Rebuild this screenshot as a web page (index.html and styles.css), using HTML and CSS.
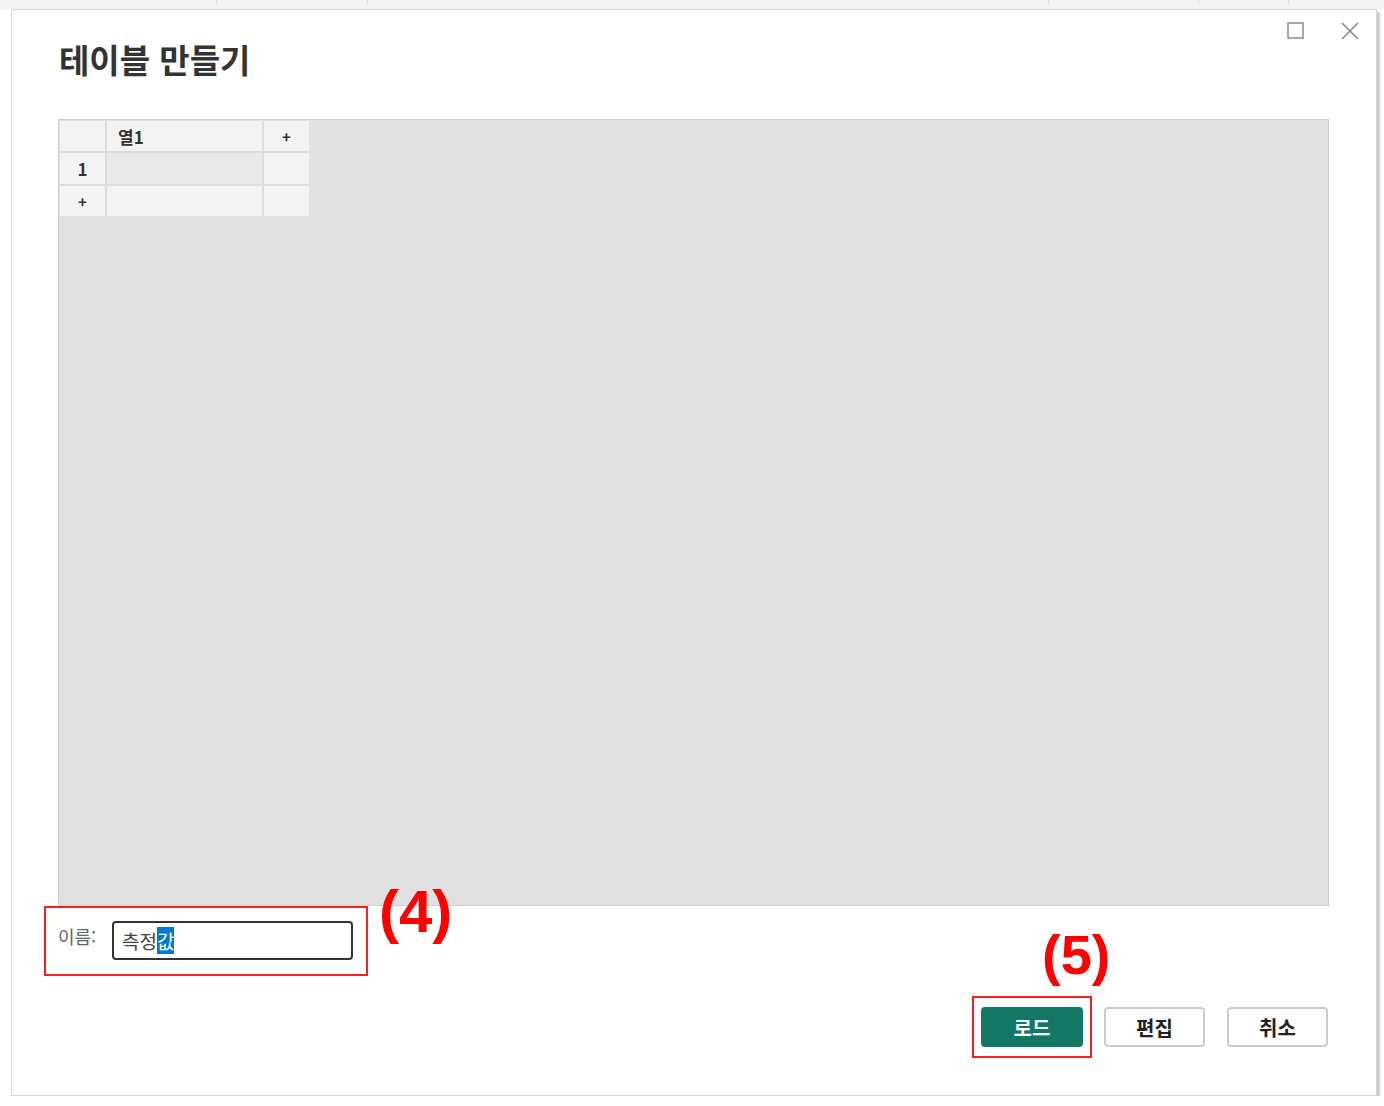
FILE: index.html
```html
<!DOCTYPE html>
<html lang="ko">

<head>
    <meta charset="utf-8" />
    <title>테이블 만들기</title>
    <link rel="stylesheet" href="styles.css">
</head>

<body>
    <div class="backdrop-strip">
        <span class="strip-part strip-a"></span>
        <span class="strip-part strip-b"></span>
        <span class="strip-part strip-c"></span>
        <span class="strip-part strip-d"></span>
        <span class="strip-part strip-e"></span>
    </div>

    <div class="dialog">
        <div class="window-controls">
            <svg class="win-btn" width="17" height="17" viewBox="0 0 17 17">
                <rect x="1" y="1" width="15" height="15" fill="none" stroke="#8a8a8a" stroke-width="1.5" />
            </svg>
            <svg class="win-btn" width="18" height="18" viewBox="0 0 18 18">
                <path d="M1 1 L17 17 M17 1 L1 17" stroke="#8a8a8a" stroke-width="1.6" fill="none" />
            </svg>
        </div>

        <h1 class="dialog-title">테이블 만들기</h1>

        <div class="table-panel">
            <div class="data-grid">
                <div class="cell"></div>
                <div class="cell col-head">열1</div>
                <div class="cell add-cell">+</div>
                <div class="cell row-head">1</div>
                <div class="cell data-cell"></div>
                <div class="cell"></div>
                <div class="cell add-cell">+</div>
                <div class="cell"></div>
                <div class="cell"></div>
            </div>
        </div>

        <div class="name-row">
            <div class="mark-box name-box">
                <label class="name-label">이름:</label>
                <div class="name-input">측정<span class="selected-text">값</span></div>
            </div>
            <div class="step-mark step-four">(4)</div>
        </div>

        <div class="actions">
            <div class="mark-box load-box">
                <div class="step-mark step-five">(5)</div>
                <button class="btn btn-primary">로드</button>
            </div>
            <button class="btn">편집</button>
            <button class="btn btn-last">취소</button>
        </div>
    </div>
</body>

</html>
```

FILE: styles.css
```css
body {
    margin: 0;
    background-color: #ffffff;
    font-family: "Noto Sans CJK KR", "Liberation Sans", sans-serif;
    color: #333333;
}

.backdrop-strip {
    height: 9px;
    background-color: #f4f4f4;
    display: flex;
}

.strip-part {
    height: 4px;
    border-right: 1px solid #dddddd;
}

.strip-a {
    width: 216px;
}

.strip-b {
    width: 150px;
}

.strip-c {
    width: 680px;
}

.strip-d {
    width: 149px;
}

.strip-e {
    width: 89px;
}

.dialog {
    box-sizing: border-box;
    width: 1366px;
    height: 1087px;
    margin-left: 11px;
    padding: 12px 47px 0 46px;
    background-color: #ffffff;
    border: 1px solid #d6d6d6;
    box-shadow: 3px 3px 2px rgba(0, 0, 0, 0.22);
}

.window-controls {
    display: flex;
    justify-content: flex-end;
    align-items: center;
    gap: 37px;
    height: 17px;
    margin-right: -30px;
}

.win-btn {
    display: block;
}

.dialog-title {
    margin: 0 0 40px 1px;
    font-size: 33px;
    line-height: 40px;
    font-weight: 700;
    color: #333333;
}

.table-panel {
    box-sizing: border-box;
    height: 787px;
    padding: 1px;
    background-color: #e1e1e1;
    border: 1px solid #cdcdcd;
}

.data-grid {
    display: grid;
    grid-template-columns: 45px 155px 45px;
    grid-template-rows: 30px 31px 30px;
    gap: 2px;
    width: fit-content;
    background-color: #dcdcdc;
}

.cell {
    background-color: #f3f3f3;
    display: flex;
    align-items: center;
    font-size: 17px;
    font-weight: 700;
    color: #333333;
}

.col-head {
    padding-left: 11px;
}

.add-cell,
.row-head {
    justify-content: center;
}

.add-cell {
    font-size: 15px;
}

.data-cell {
    background-color: #e9e9e9;
}

.name-row {
    display: flex;
    align-items: flex-start;
    margin-left: -14px;
}

.mark-box {
    border: 2px solid #ff1f1f;
}

.name-box {
    box-sizing: border-box;
    width: 324px;
    height: 70px;
    padding: 13px 0 0 12px;
    display: flex;
    align-items: flex-start;
}

.name-label {
    width: 54px;
    margin-top: 2px;
    font-size: 18px;
    line-height: 26px;
    color: #666666;
}

.name-input {
    box-sizing: border-box;
    width: 241px;
    height: 39px;
    padding-left: 8px;
    border: 2px solid #333333;
    border-radius: 4px;
    font-size: 19px;
    line-height: 36px;
    color: #444444;
}

.selected-text {
    background-color: #0078d7;
    color: #ffffff;
}

.step-mark {
    font-family: "Liberation Sans", sans-serif;
    font-weight: 700;
    color: #ff0000;
    line-height: 1;
}

.step-four {
    margin: -24px 0 0 11px;
    font-size: 60px;
}

.actions {
    display: flex;
    justify-content: flex-end;
    align-items: center;
    gap: 12px;
    margin-top: 20px;
    margin-right: 1px;
}

.load-box {
    position: relative;
    padding: 9px 7px;
}

.step-five {
    position: absolute;
    left: 68px;
    bottom: 73px;
    font-size: 56px;
}

.btn {
    box-sizing: border-box;
    width: 101px;
    height: 40px;
    background-color: #ffffff;
    border: 2px solid #cbcbcb;
    border-radius: 4px;
    font-family: "Noto Sans CJK KR", "Liberation Sans", sans-serif;
    font-size: 20px;
    font-weight: 700;
    color: #222222;
    padding: 0;
}

.btn-primary {
    display: block;
    width: 102px;
    background-color: #127865;
    border-color: #127865;
    color: #ffffff;
}

.btn-last {
    margin-left: 10px;
}
```
